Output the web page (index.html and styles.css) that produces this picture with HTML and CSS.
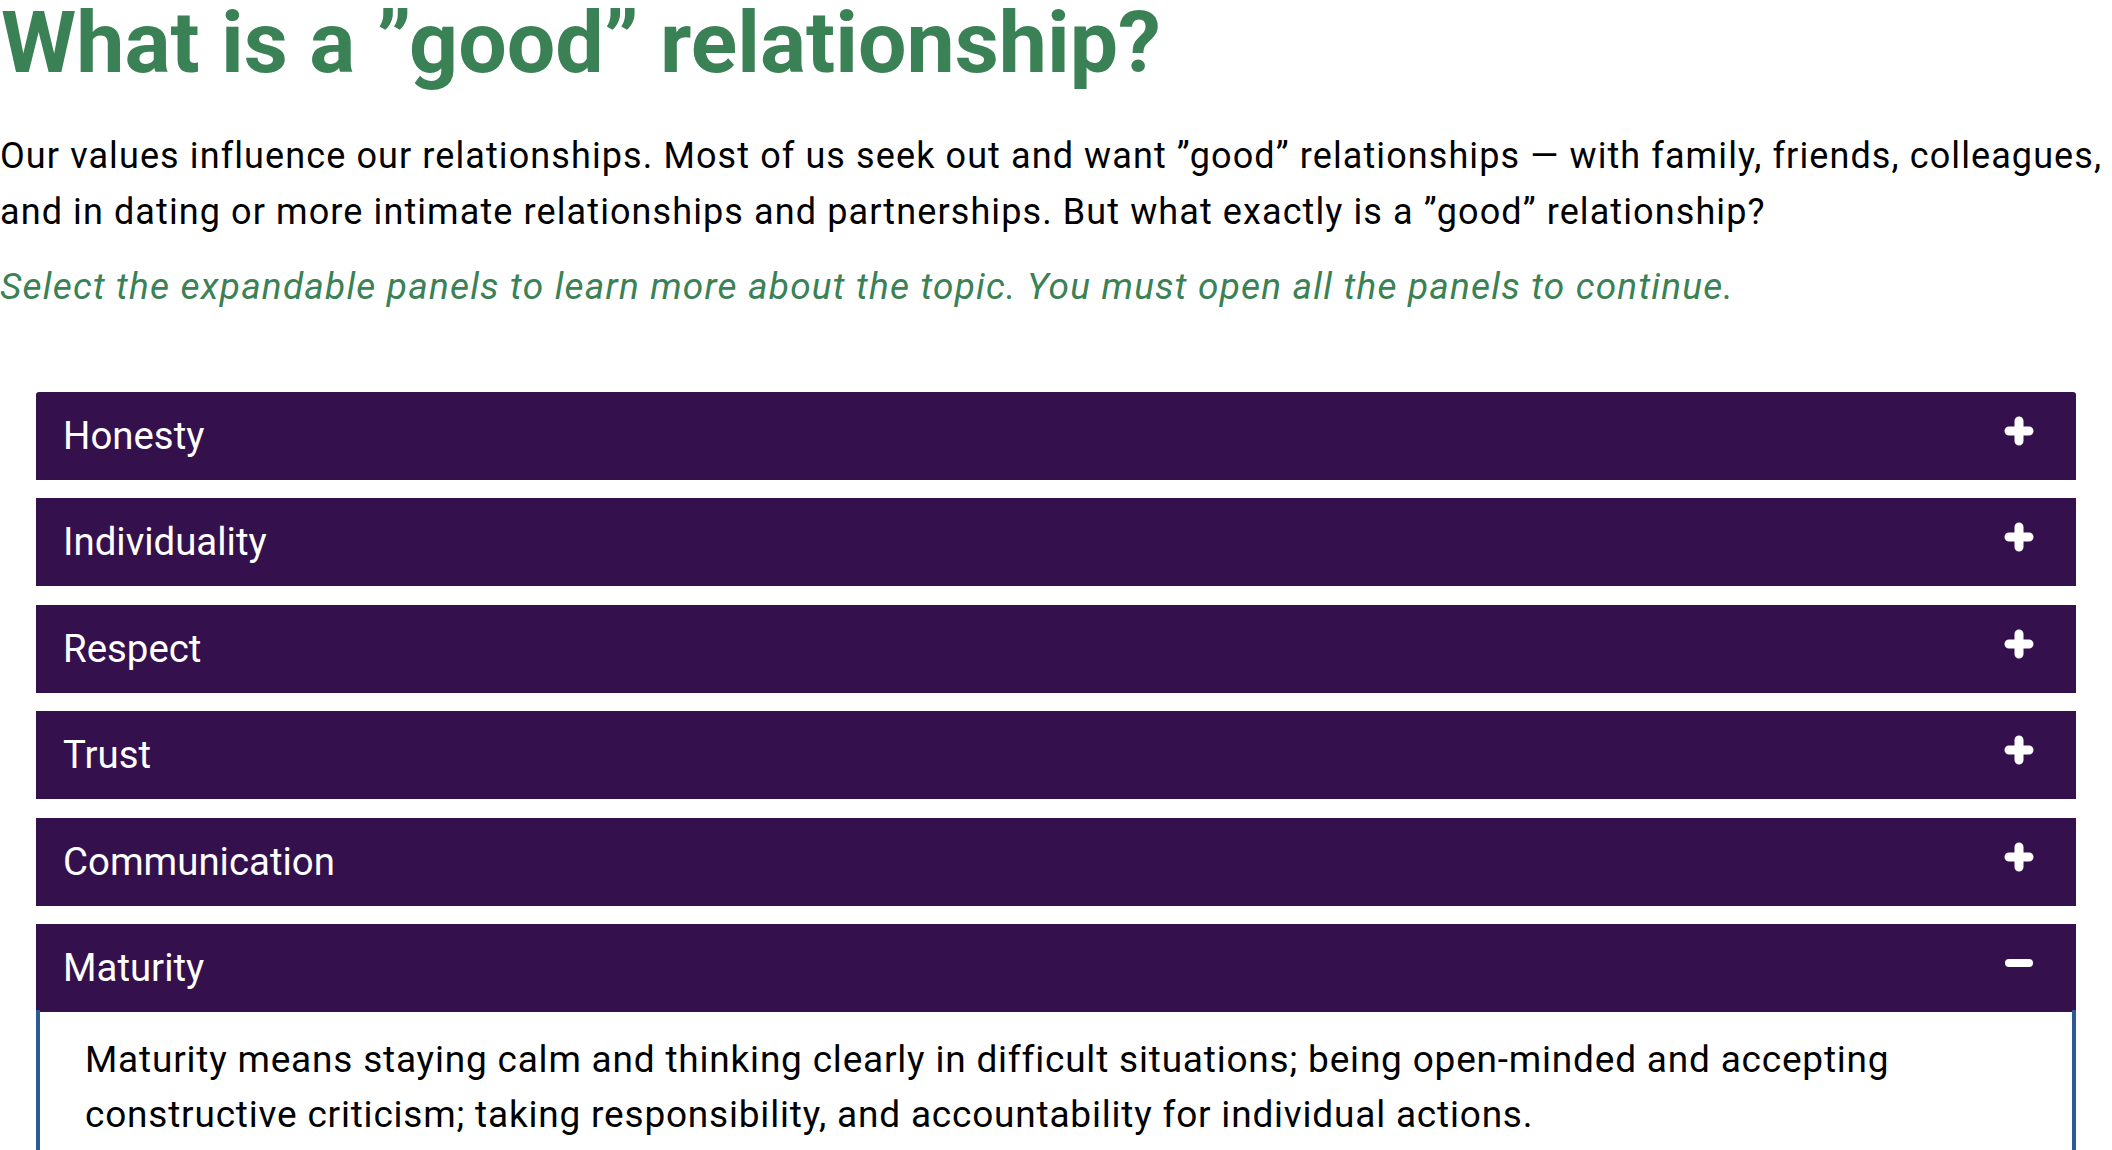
FILE: index.html
```html
<!DOCTYPE html>
<html lang="en">
<head>
    <meta charset="UTF-8">
    <meta name="viewport" content="width=device-width, initial-scale=1.0">
    <title>What is a "good" relationship?</title>
    <link rel="stylesheet" href="styles.css">
</head>
<body>
    <h1 class="title">What is a &rdquo;good&rdquo; relationship?</h1>
    <p class="intro">Our values influence our relationships. Most of us seek out and want &rdquo;good&rdquo; relationships &mdash; with family, friends, colleagues, and in dating or more intimate relationships and partnerships. But what exactly is a &rdquo;good&rdquo; relationship?</p>
    <p class="instructions">Select the expandable panels to learn more about the topic. You must open all the panels to continue.</p>

    <div class="accordion">
        <div class="panel">
            <button class="panel-header" type="button">
                <span>Honesty</span>
                <svg class="icon" viewBox="0 0 30 30"><path d="M15 5V25M5 15H25"/></svg>
            </button>
        </div>
        <div class="panel">
            <button class="panel-header" type="button">
                <span>Individuality</span>
                <svg class="icon" viewBox="0 0 30 30"><path d="M15 5V25M5 15H25"/></svg>
            </button>
        </div>
        <div class="panel">
            <button class="panel-header" type="button">
                <span>Respect</span>
                <svg class="icon" viewBox="0 0 30 30"><path d="M15 5V25M5 15H25"/></svg>
            </button>
        </div>
        <div class="panel">
            <button class="panel-header" type="button">
                <span>Trust</span>
                <svg class="icon" viewBox="0 0 30 30"><path d="M15 5V25M5 15H25"/></svg>
            </button>
        </div>
        <div class="panel">
            <button class="panel-header" type="button">
                <span>Communication</span>
                <svg class="icon" viewBox="0 0 30 30"><path d="M15 5V25M5 15H25"/></svg>
            </button>
        </div>
        <div class="panel open">
            <button class="panel-header" type="button">
                <span>Maturity</span>
                <svg class="icon minus" viewBox="0 0 30 30"><path d="M5 15H25"/></svg>
            </button>
            <div class="panel-body">
                <p>Maturity means staying calm and thinking clearly in difficult situations; being open-minded and accepting constructive criticism; taking responsibility, and accountability for individual actions.</p>
            </div>
        </div>
    </div>
</body>
</html>
```

FILE: styles.css
```css
body {
    font-family: Roboto, "Liberation Sans", sans-serif;
    background-color: #fff;
    color: #000;
    margin: 0;
    padding: 0;
}

.title {
    font-size: 86px;
    line-height: 1;
    font-weight: 700;
    color: #3a8155;
    margin: 0 0 42px 1px;
}

.intro,
.instructions {
    font-size: 36px;
    line-height: 56px;
    letter-spacing: 1.1px;
    margin: 0 0 19px;
}

.instructions {
    font-size: 37px;
    font-style: italic;
    letter-spacing: 1.2px;
    color: #3a8155;
}

.accordion {
    margin: 77px 36px 0;
    border-radius: 3px 3px 0 0;
    overflow: hidden;
}

.panel {
    margin-bottom: 18.4px;
}

.panel-header {
    display: flex;
    justify-content: space-between;
    align-items: flex-start;
    width: 100%;
    height: 88px;
    padding: 0 42px 0 27px;
    border: none;
    background-color: #34104d;
    color: #fff;
    font-family: inherit;
    font-size: 38.4px;
    line-height: 88px;
    text-align: left;
    cursor: pointer;
}

.icon {
    width: 30px;
    height: 30px;
    margin-top: 24px;
    fill: none;
    stroke: #fff;
    stroke-width: 9;
    stroke-linecap: round;
}

.icon.minus {
    stroke-width: 8;
}

.panel-body {
    border-left: 4px solid #2a5b95;
    border-right: 4px solid #2a5b95;
    margin-top: -2px;
    padding: 22px 45px 30px 45px;
}

.panel-body p {
    font-size: 37px;
    line-height: 55px;
    letter-spacing: 0.8px;
    margin: 0;
}
```
